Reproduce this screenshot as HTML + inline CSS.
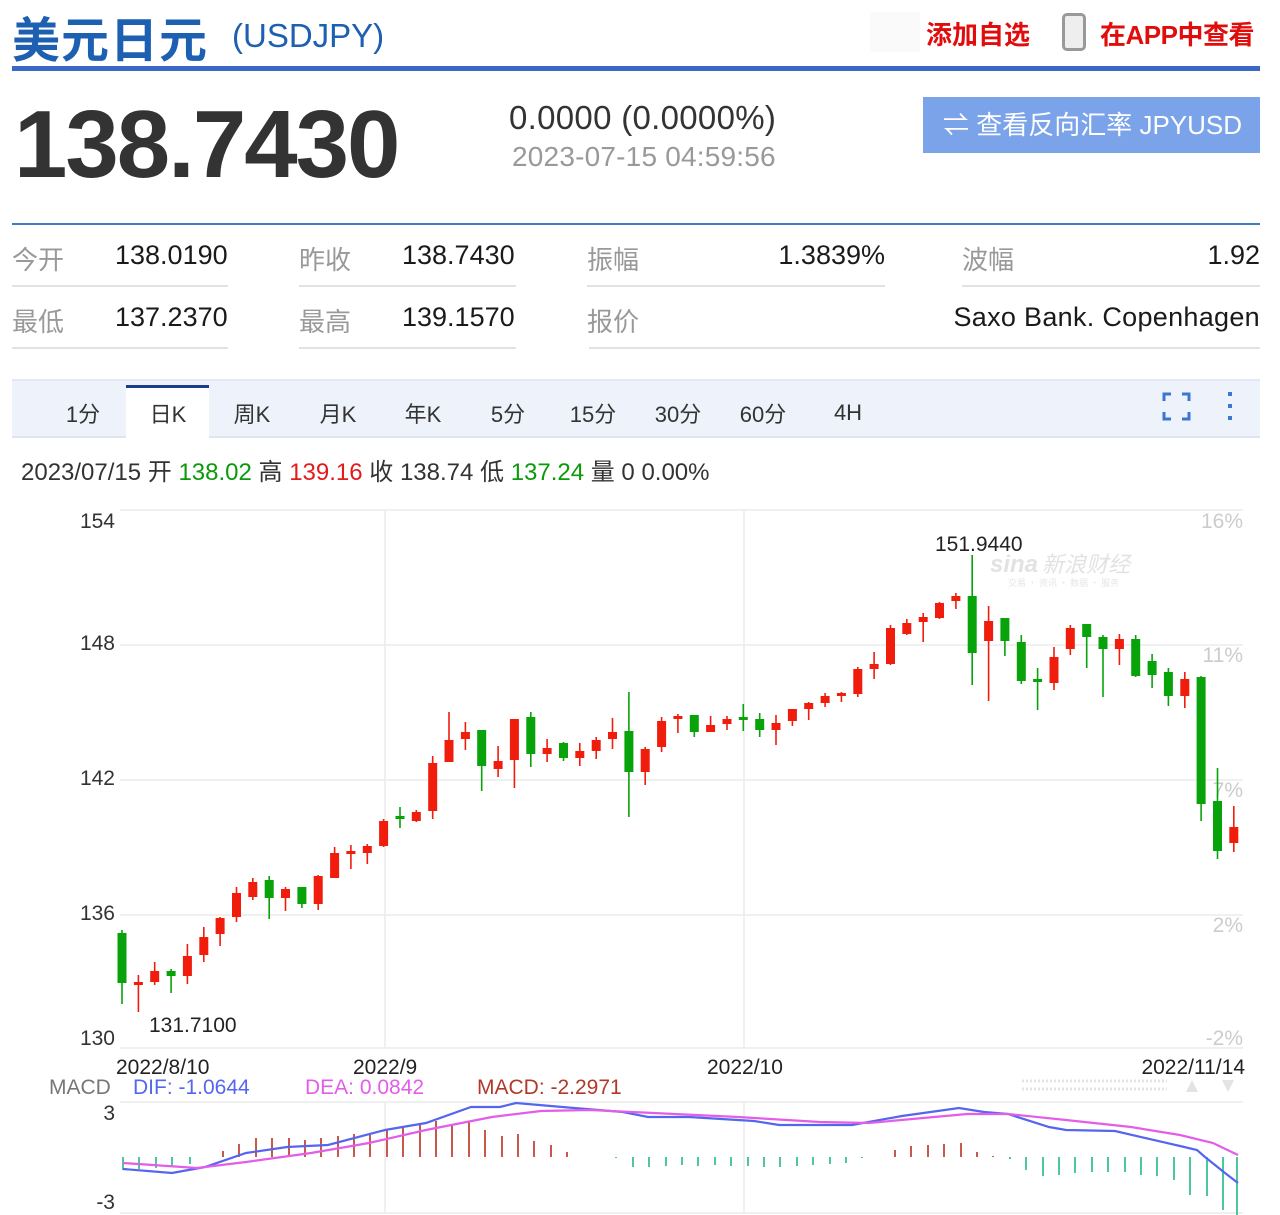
<!DOCTYPE html>
<html><head><meta charset="utf-8">
<style>
*{margin:0;padding:0;box-sizing:border-box}
body{width:1280px;height:1215px;background:#fff;font-family:"Liberation Sans","Noto Sans CJK SC",sans-serif;position:relative;overflow:hidden;color:#222}
.a{position:absolute;white-space:nowrap}
.lbl{color:#999;font-size:26px}
.val{color:#1a1a1a;font-size:27px}
.ul{position:absolute;height:2px;background:#e2e2e2}
.tab{position:absolute;top:397px;font-size:22px;color:#333;width:80px;text-align:center;margin-left:-40px}
</style></head><body>
<div class="a" style="left:12px;top:1px;font-size:48px;font-weight:bold;color:#1d5fb0;letter-spacing:1px">美元日元</div>
<div class="a" style="left:232px;top:17px;font-size:33px;color:#1d5fb0">(USDJPY)</div>
<div class="a" style="left:870px;top:12px;width:50px;height:40px;background:#fafafa"></div>
<div class="a" style="left:926px;top:15px;font-size:26px;font-weight:bold;color:#e10d0d">添加自选</div>
<div class="a" style="left:1062px;top:13px;width:24px;height:38px;border:3px solid #999;border-radius:5px;background:#eee"></div>
<div class="a" style="left:1100px;top:15px;font-size:26px;font-weight:bold;color:#e10d0d;letter-spacing:-0.5px">在APP中查看</div>
<div class="a" style="left:12px;top:66px;width:1248px;height:5px;background:#3a67c8"></div>

<div class="a" style="left:14px;top:90px;font-size:96px;font-weight:bold;color:#333;letter-spacing:-2px">138.7430</div>
<div class="a" style="left:509px;top:99px;font-size:33px;color:#333;letter-spacing:0.3px">0.0000 (0.0000%)</div>
<div class="a" style="left:512px;top:141px;font-size:28px;color:#999;letter-spacing:0.2px">2023-07-15 04:59:56</div>
<div class="a" style="left:923px;top:97px;width:337px;height:56px;background:#7ba3ea;color:#fff;font-size:26px;line-height:56px;padding-left:20px;overflow:hidden">⇌ 查看反向汇率 JPYUSD</div>

<div class="a" style="left:12px;top:223px;width:1248px;height:2px;background:#3f7dc0"></div>
<div class="a lbl" style="left:12px;top:240px">今开</div>
<div class="a val" style="left:115px;top:240px">138.0190</div>
<div class="a lbl" style="left:299px;top:240px">昨收</div>
<div class="a val" style="left:402px;top:240px">138.7430</div>
<div class="a lbl" style="left:587px;top:240px">振幅</div>
<div class="a val" style="right:395px;top:240px">1.3839%</div>
<div class="a lbl" style="left:962px;top:240px">波幅</div>
<div class="a val" style="right:20px;top:240px">1.92</div>
<div class="ul" style="left:12px;top:285px;width:216px"></div>
<div class="ul" style="left:299px;top:285px;width:217px"></div>
<div class="ul" style="left:587px;top:285px;width:298px"></div>
<div class="ul" style="left:962px;top:285px;width:298px"></div>
<div class="a lbl" style="left:12px;top:302px">最低</div>
<div class="a val" style="left:115px;top:302px">137.2370</div>
<div class="a lbl" style="left:299px;top:302px">最高</div>
<div class="a val" style="left:402px;top:302px">139.1570</div>
<div class="a lbl" style="left:587px;top:302px">报价</div>
<div class="a val" style="right:20px;top:302px;letter-spacing:0.3px">Saxo Bank. Copenhagen</div>
<div class="ul" style="left:12px;top:347px;width:216px"></div>
<div class="ul" style="left:299px;top:347px;width:217px"></div>
<div class="ul" style="left:589px;top:347px;width:671px"></div>

<div class="a" style="left:12px;top:379px;width:1248px;height:59px;background:#eef2fb;border-top:2px solid #e2e8f5;border-bottom:2px solid #dde4f2"></div>
<div class="a" style="left:126px;top:385px;width:83px;height:53px;background:#fff;border-top:3px solid #1a3e8c"></div>
<div class="tab" style="left:83px">1分</div>
<div class="tab" style="left:168px">日K</div>
<div class="tab" style="left:252px">周K</div>
<div class="tab" style="left:338px">月K</div>
<div class="tab" style="left:423px">年K</div>
<div class="tab" style="left:508px">5分</div>
<div class="tab" style="left:593px">15分</div>
<div class="tab" style="left:678px">30分</div>
<div class="tab" style="left:763px">60分</div>
<div class="tab" style="left:848px;top:400px">4H</div>
<svg class="a" style="left:1160px;top:390px" width="80" height="34">
<path d="M4 11V4h7M22 4h7v7M29 22v7h-7M11 29H4v-7" fill="none" stroke="#3a78d0" stroke-width="3"/>
<rect x="68" y="2" width="4" height="4" fill="#3a78d0"/><rect x="68" y="14" width="4" height="4" fill="#3a78d0"/><rect x="68" y="26" width="4" height="4" fill="#3a78d0"/>
</svg>
<div class="a" style="left:21px;top:452px;font-size:24px;color:#333">2023/07/15 开 <span style="color:#0a9a0a">138.02</span> 高 <span style="color:#e41b1b">139.16</span> 收 138.74 低 <span style="color:#0a9a0a">137.24</span> 量 0 0.00%</div>

<svg class="a" style="left:0;top:0" width="1280" height="1215">
<g stroke="#ececec" stroke-width="1.5">
<path d="M120 510H1243M120 645H1243M120 780H1243M120 915H1243M120 1048H1243M385 510V1048M744 510V1048"/>
<path d="M120 1102H1243M120 1213H1243M385 1102V1213M744 1102V1213"/>
</g>
<g font-family="Liberation Sans,sans-serif" font-size="21" fill="#333" text-anchor="end">
<text x="115" y="528">154</text><text x="115" y="650">148</text><text x="115" y="785">142</text><text x="115" y="920">136</text><text x="115" y="1045">130</text>
</g>
<g font-family="Liberation Sans,sans-serif" font-size="21" fill="#ccc" text-anchor="end">
<text x="1243" y="528">16%</text><text x="1243" y="662">11%</text><text x="1243" y="797">7%</text><text x="1243" y="932">2%</text><text x="1243" y="1045">-2%</text>
</g>
<text x="990" y="572" font-family="Liberation Sans,sans-serif" font-size="24" font-weight="bold" font-style="italic" fill="#e2e2e2">sina</text>
<text x="1042" y="572" font-family="Noto Sans CJK SC,sans-serif" font-size="22" font-style="italic" fill="#e2e2e2">新浪财经</text>
<text x="1008" y="586" font-family="Noto Sans CJK SC,sans-serif" font-size="9" fill="#e6e6e6">交易 · 资讯 · 数据 · 服务</text>
<g stroke="#f01c0c" fill="none">
<path stroke-width="1.6" d="M138.4 975V1012M154.7 962V985M187.4 944V984M203.8 927V962M220.1 917V946M236.5 887V922M252.8 878V900M285.5 887V911M318.2 875V910M334.6 847V878M350.9 845V869M367.3 844V864M383.6 819V847M416.3 810V822M432.7 756V819M449 712V762M465.4 722V750M498.1 746V777M514.4 719V788M547.1 739V762M579.8 743V766M596.2 737V759M612.5 718V749M645.2 747V785M661.6 717V752M677.9 714V733M710.6 716V732M727 716V730M776 715V745M792.4 709V726M808.7 702V720M825.1 693V707M841.4 692V702M857.8 667V697M874.1 652V679M890.5 625V665M906.8 619V635M923.2 613V642M939.5 602V619M955.9 593V609M988.6 606V701M1054 647V690M1070.3 625V655M1119.4 634V665M1184.8 672V708M1233.8 806V852"/>
<path stroke-width="9" d="M138.4 982V985M154.7 971V982M187.4 956V976M203.8 937V955M220.1 918V934M236.5 893V917M252.8 882V897M285.5 889V898M318.2 876V904M334.6 853V878M350.9 851V854M367.3 846V853M383.6 821V846M416.3 812V821M432.7 763V811M449 740V762M465.4 732V739M498.1 761V769M514.4 719V760M547.1 748V754M579.8 751V758M596.2 740V751M612.5 732V739M645.2 749V772M661.6 721V747M677.9 716V719M710.6 725V732M727 719V724M776 723V730M792.4 709V721M808.7 703V709M825.1 696V703M841.4 693V696M857.8 669V694M874.1 664V669M890.5 628V664M906.8 623V634M923.2 617V622M939.5 603V618M955.9 596V601M988.6 621V641M1054 657V683M1070.3 628V649M1119.4 639V649M1184.8 679V696M1233.8 827V843"/>
</g>
<g stroke="#08a30b" fill="none">
<path stroke-width="1.6" d="M122 930V1004M171.1 969V993M269.2 876V919M301.9 887V908M400 807V828M481.7 730V791M530.8 712V767M563.5 742V761M628.9 692V817M694.3 715V737M743.3 704V731M759.7 713V737M972.2 555V685M1004.9 618V656M1021.3 635V684M1037.6 668V710M1086.7 624V668M1103 635V697M1135.7 635V677M1152.1 654V688M1168.4 668V706M1201.1 676V821M1217.5 768V859"/>
<path stroke-width="9" d="M122 933V983M171.1 971V976M269.2 880V898M301.9 887V904M400 816V819M481.7 730V766M530.8 717V754M563.5 743V758M628.9 731V772M694.3 715V732M743.3 717V720M759.7 719V730M972.2 596V653M1004.9 618V641M1021.3 642V681M1037.6 679V682M1086.7 624V637M1103 637V649M1135.7 639V676M1152.1 661V675M1168.4 672V696M1201.1 677V804M1217.5 801V851"/>
</g>
<g font-family="Liberation Sans,sans-serif" font-size="21" fill="#222">
<text x="935" y="551">151.9440</text>
<text x="149" y="1032">131.7100</text>
<text x="116" y="1074">2022/8/10</text>
<text x="353" y="1074">2022/9</text>
<text x="707" y="1074">2022/10</text>
<text x="1245" y="1074" text-anchor="end">2022/11/14</text>
</g>
<g font-family="Liberation Sans,sans-serif" font-size="21">
<text x="49" y="1094" fill="#777">MACD</text>
<text x="133" y="1094" fill="#5566ee">DIF: -1.0644</text>
<text x="305" y="1094" fill="#e35de8">DEA: 0.0842</text>
<text x="477" y="1094" fill="#b03a2a">MACD: -2.2971</text>
<text x="115" y="1120" fill="#333" text-anchor="end">3</text>
<text x="115" y="1209" fill="#333" text-anchor="end">-3</text>
</g>
<path d="M1022 1081H1167M1022 1089H1167" stroke="#e4e4e4" stroke-width="3" stroke-dasharray="2 2"/>
<path d="M1186 1092l6-12 6 12zM1222 1080l6 12 6-12z" fill="#e4e4e4"/>
<path stroke="#b8301e" stroke-width="1.6" d="M223 1157V1151M239 1157V1144M256 1157V1138M272 1157V1138M289 1157V1138M305 1157V1140M321 1157V1138M338 1157V1136M354 1157V1134M370 1157V1133M387 1157V1130M403 1157V1128M420 1157V1125M436 1157V1121M452 1157V1124M469 1157V1122M485 1157V1130M502 1157V1136M518 1157V1134M534 1157V1141M551 1157V1145M567 1157V1152M895 1157V1150M911 1157V1146M928 1157V1145M944 1157V1144M961 1157V1143M977 1157V1152M993 1157V1156"/>
<path stroke="#20b98a" stroke-width="1.6" d="M123 1157V1170M139 1157V1169M156 1157V1168M172 1157V1167M190 1157V1164M616 1157V1158M633 1157V1167M649 1157V1167M666 1157V1166M682 1157V1165M698 1157V1166M715 1157V1165M731 1157V1166M748 1157V1166M764 1157V1167M780 1157V1167M797 1157V1166M813 1157V1165M830 1157V1164M846 1157V1163M862 1157V1158M1010 1157V1159M1026 1157V1170M1043 1157V1176M1059 1157V1175M1075 1157V1173M1092 1157V1172M1108 1157V1172M1125 1157V1172M1141 1157V1175M1157 1157V1176M1174 1157V1180M1190 1157V1195M1207 1157V1196M1223 1157V1210M1237 1157V1215"/>
<polyline fill="none" stroke="#5566ee" stroke-width="2.2" points="123,1169 172,1173 205,1167 246,1153 287,1147 328,1145 385,1130 426,1123 471,1107 500,1107 516,1103 574,1108 623,1112 648,1117 689,1117 754,1121 779,1125 852,1125 902,1116 959,1108 984,1112 1008,1114 1049,1127 1066,1130 1115,1131 1180,1146 1197,1150 1205,1157 1225,1173 1238,1183"/>
<polyline fill="none" stroke="#e35de8" stroke-width="2.2" points="123,1163 197,1168 246,1162 311,1153 369,1143 426,1130 492,1117 541,1111 590,1110 738,1117 820,1122 869,1123 967,1114 1008,1114 1066,1120 1131,1127 1180,1135 1213,1143 1238,1155"/>
</svg>
</body></html>
